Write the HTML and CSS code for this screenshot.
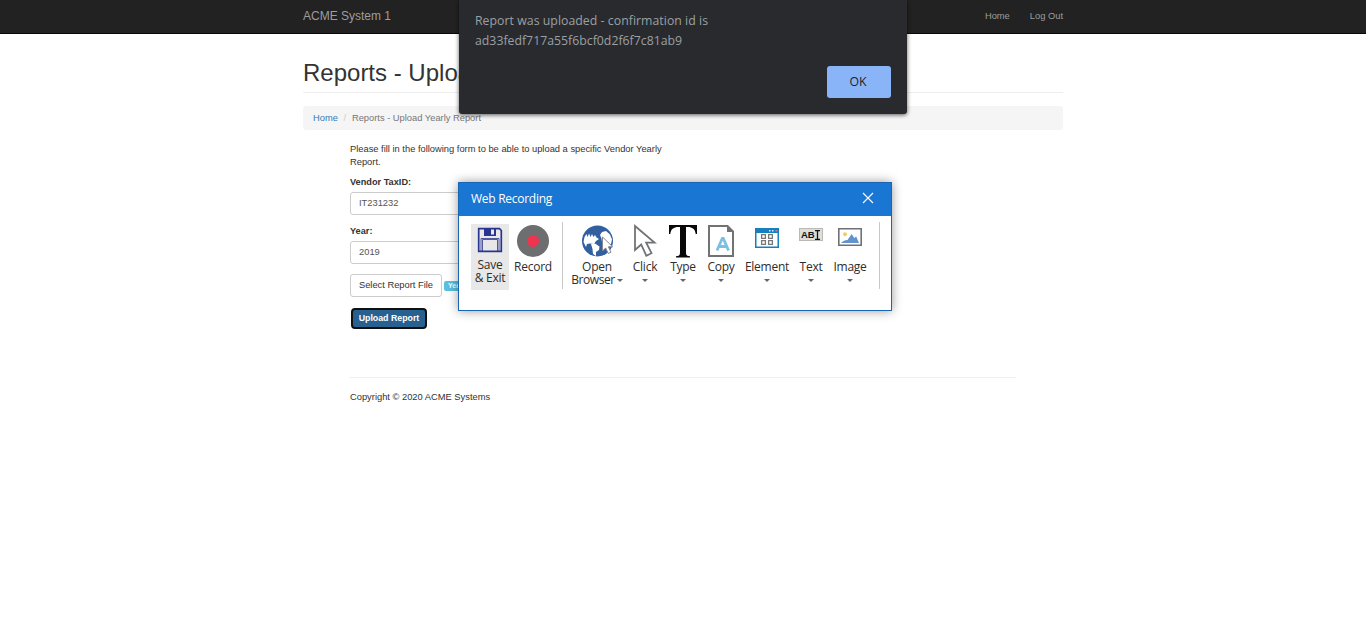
FILE: index.html
```html
<!DOCTYPE html>
<html lang="en">
<head>
<meta charset="utf-8">
<title>ACME System 1 - Upload Yearly Report</title>
<link rel="stylesheet" href="styles.css">
</head>
<body>
<nav class="navbar">
  <div class="container nav-row">
    <a class="brand">ACME System 1</a>
    <div class="nav-links"><a class="nav-home">Home</a><a class="nav-out">Log Out</a></div>
  </div>
</nav>
<main class="container">
  <h1 class="page-title">Reports - Upload</h1>
  <div class="breadcrumb"><a class="crumb-link">Home</a><span class="crumb-sep">/</span><span class="crumb-now">Reports - Upload Yearly Report</span></div>
  <div class="content">
    <p class="intro"><span class="intro-line">Please fill in the following form to be able to upload a specific Vendor Yearly</span><br>Report.</p>
    <label class="label label-tax">Vendor TaxID:</label>
    <div class="field">IT231232</div>
    <label class="label label-year">Year:</label>
    <div class="field">2019</div>
    <div class="file-row"><button class="btn-file">Select Report File</button><span class="tag">Year</span></div>
    <button class="btn-upload">Upload Report</button>
    <footer class="footer"><span class="copyright">Copyright © 2020 ACME Systems</span></footer>
  </div>
</main>

<section class="alert">
  <p class="alert-text"><span class="alert-l1">Report was uploaded - confirmation id is</span><br><span class="alert-l2">ad33fedf717a55f6bcf0d2f6f7c81ab9</span></p>
  <button class="alert-ok">OK</button>
</section>

<section class="recorder">
  <header class="rec-head"><span class="rec-title">Web Recording</span>
    <svg class="rec-close" width="12" height="12" viewBox="0 0 12 12"><path d="M1 1L11 11M11 1L1 11" stroke="#fff" stroke-width="1.1"/></svg>
  </header>
  <div class="rec-bar">
    <div class="tool tool-save">
      <svg class="icon" width="26" height="26" viewBox="0 0 26 26" fill="none" stroke="#28348f"><path d="M1.7 1.7H22.5L24.3 3.5V24.3H1.7Z" stroke-width="1.7"/><path d="M7 1H19V9H7Z" fill="#28348f" stroke="none"/><path d="M14 2.5H17V7.5H14Z" fill="#e8e8e8" stroke="none"/><path d="M5.5 24V12.5H20.5V24M4 24V11.5H22V24" stroke-width=".8"/></svg>
      <span class="name"><span class="line">Save</span><span class="line">&amp; Exit</span></span>
    </div>
    <div class="tool tool-record">
      <svg class="icon" width="32" height="32" viewBox="0 0 32 32"><circle cx="16" cy="16" r="16" fill="#6d6e70"/><circle cx="16" cy="16" r="6" fill="#ee344e"/></svg>
      <span class="name">Record</span>
    </div>
    <i class="divider"></i>
    <div class="tool tool-open">
      <svg class="icon" width="34" height="32" viewBox="0 0 34 32"><circle cx="17.5" cy="16" r="15.5" fill="#315f9f"/><path d="M3.5 17L4.5 12L6.5 9L7.5 12L9 8.5L10.5 12L12 9L13.5 12L15 10L16.5 12.5L19 14L16 16L14 19L10 18.5L7 19L6 22Z" fill="#fff"/><path d="M11 19L15 18.5L19.5 21.5L19 25L16 27L16 31L13 29L12.5 24Z" fill="#fff"/><path d="M20 10L22 7L26 6L30 9.5L32 14.5L31 19L27 19L22 17L21.5 13.5Z" fill="#fff"/><path d="M22.5 12V26L25.6 22.9L28.3 28.5L31 27.2L28.4 21.8H32.7Z" fill="#fff" stroke="#85878a"/></svg>
      <span class="name"><span class="line">Open</span><span class="line browser">Browser<b class="arrow arrow-inline"></b></span></span>
    </div>
    <div class="tool tool-click">
      <svg class="icon" width="24" height="34" viewBox="0 0 24 34"><path d="M2 2V26L8.2 20.5L13.3 31.7L18.5 29.2L13.2 18.7H21.8Z" fill="#fff" stroke="#727376" stroke-width="1.8"/></svg>
      <span class="name">Click</span><b class="arrow"></b>
    </div>
    <div class="tool tool-type">
      <svg class="icon" width="28" height="33" viewBox="0 0 28 33"><path d="M0 0H28V9H26.7C26.1 4 23.5 2 18.5 2H17V27.5C17 30.3 18 31.2 21 31.2V32.5H7V31.2C10 31.2 11 30.3 11 27.5V2H9.5C4.5 2 1.9 4 1.3 9H0Z" fill="#080808"/></svg>
      <span class="name">Type</span><b class="arrow"></b>
    </div>
    <div class="tool tool-copy">
      <svg class="icon" width="26" height="32" viewBox="0 0 26 32" fill="none"><path d="M1 1H19.5L25 6.5V31H1Z" fill="#fff" stroke="#707274" stroke-width="2"/><path d="M19 1V7H25Z" fill="#707274"/><path d="M9 25.5L14.3 13.3H15.3L20.5 25.5M11.4 21.5H18.5" stroke="#7dbfe4" stroke-width="2.8"/></svg>
      <span class="name">Copy</span><b class="arrow"></b>
    </div>
    <div class="tool tool-element">
      <svg class="icon" width="24" height="20" viewBox="0 0 24 20"><path d="M0 0H24V20H0Z" fill="#1580bd"/><path d="M1.5 5H22.5V18.5H1.5Z" fill="#fff"/><path d="M14 2H15.5V3.5H14ZM17 2H18.5V3.5H17Z" fill="#d4eefc"/><path d="M20.5 2H22.3V3.5H20.5Z" fill="#e5748b"/><path d="M6.6 6.6H10.4V10.4H6.6ZM13.6 6.6H17.4V10.4H13.6ZM6.6 12.6H10.4V16.4H6.6ZM13.6 12.6H17.4V16.4H13.6Z" fill="#fff" stroke="#77787a" stroke-width="1.3"/></svg>
      <span class="name">Element</span><b class="arrow"></b>
    </div>
    <div class="tool tool-text">
      <div class="icon text-icon"><span>AB</span><svg width="5" height="10" viewBox="0 0 5 10"><path d="M0 .7H2L2.5 1.2L3 .7H5M2.5 1V9M0 9.3H2L2.5 8.8L3 9.3H5" stroke="#111" stroke-width="1.3" fill="none"/></svg></div>
      <span class="name">Text</span><b class="arrow"></b>
    </div>
    <div class="tool tool-image">
      <svg class="icon" width="24" height="18" viewBox="0 0 24 18"><path d="M.8 .8H23.2V17.2H.8Z" fill="#fff" stroke="#707174" stroke-width="1.6"/><circle cx="7" cy="6.3" r="2" fill="#f0cf63"/><path d="M3 15C5 13 7 12 9.5 12L13.7 6L16.2 10L18.2 8.5L21 15Z" fill="#6492cd"/></svg>
      <span class="name">Image</span><b class="arrow"></b>
    </div>
    <i class="divider divider-end"></i>
  </div>
</section>
</body>
</html>
```
FILE: styles.css
```css
* { box-sizing: border-box; }
body { margin: 0; height: 635px; overflow: hidden; position: relative; background: #fff; color: #333; font: 9.33px/13px "Liberation Sans", Arial, sans-serif; }
button { font: inherit; padding: 0; }
span, a { white-space: nowrap; }
.container { width: 760px; margin: 0 auto; }
.navbar { height: 34px; background: #222; border-bottom: 1px solid #080808; color: #9d9d9d; }
.nav-row { display: flex; justify-content: space-between; line-height: 32px; }
.brand { font-size: 12px; }
.nav-links { display: flex; gap: 20px; }
.page-title { margin: 0; padding-top: 25px; height: 59px; font-size: 24px; line-height: 28px; font-weight: 400; border-bottom: 1px solid #eee; }
.breadcrumb { margin-top: 13px; height: 24px; padding-left: 10px; line-height: 24px; background: #f5f5f5; border-radius: 3px; color: #777; display: flex; }
.crumb-link { color: #337ab7; }
.crumb-sep { color: #ccc; width: 14px; text-align: center; }
.content { width: 666px; margin: 13px 0 0 47px; }
.intro { margin: 0; height: 26px; }
.label { display: block; font-weight: 700; font-size: 9.2px; }
.label-tax { margin: 7px 0 3px; }
.label-year { margin: 10px 0 3px; }
.field { width: 187px; height: 23px; border: 1px solid #ccc; border-radius: 3px; padding-left: 8px; line-height: 21px; color: #555; }
.file-row { display: flex; align-items: center; gap: 2px; margin: 10px 0; }
.btn-file { width: 92px; height: 23px; background: #fff; border: 1px solid #ccc; border-radius: 3px; color: #333; }
.tag { width: 28px; height: 10px; padding-left: 4px; line-height: 10px; background: #5bc0de; color: #fff; border-radius: 2px; font-size: 7px; font-weight: 700; }
.btn-upload { display: block; width: 76px; height: 21px; margin: 11px 0 0 1px; background: #286090; color: #fff; font-weight: 700; font-size: 8.8px; border: 2px solid #101010; border-radius: 4px; }
.footer { margin-top: 48px; padding-top: 13px; border-top: 1px solid #eee; }

.alert { position: absolute; left: 459px; top: 0; width: 448px; height: 114px; padding: 11px 16px 10px; background: #292a2d; color: #9aa0a6; border-radius: 0 0 3px 3px; box-shadow: 0 1px 4px rgba(0,0,0,.65); font: 12.3px/20px "Open Sans", sans-serif; display: flex; flex-direction: column; justify-content: space-between; }
.alert-text { margin: 0; }
.alert-l1 { letter-spacing: .03px; }
.alert-ok { align-self: flex-end; width: 64px; height: 32px; margin-bottom: 6px; padding-right: 2px; border: 0; border-radius: 3px; background: #8ab4f8; color: #202124; }

.recorder { position: absolute; left: 458px; top: 182px; width: 434px; height: 129px; background: #fff; border: 1px solid #1866b4; box-shadow: 0 0 10px rgba(0,0,0,.4); font: 12px/13px "Open Sans", sans-serif; color: #2d2d2d; }
.rec-head { height: 33px; padding: 0 17px 3px 12px; display: flex; align-items: center; justify-content: space-between; background: #1976d3; color: #fff; }
.rec-title { letter-spacing: -.27px; }
.rec-bar { display: flex; padding: 8px 0 0 12px; height: 75px; }
.tool { display: flex; flex-direction: column; align-items: center; flex: none; height: 66px; text-align: center; }
.icon { display: block; flex: none; }
.name { margin-top: auto; height: 30px; letter-spacing: -.25px; }
.line { display: block; line-height: 13px; }
.browser { display: flex; align-items: center; letter-spacing: -.45px; }
.arrow { border: 3px solid transparent; border-top-color: #666; border-bottom: 0; margin: -11px 0 8px; height: 3px; width: 6px; flex: none; }
.arrow-inline { margin: 1px 0 0 2px; }
.divider { flex: none; width: 1px; height: 67px; margin: -2px 9px 0 5px; background: #c8c8c8; }
.divider-end { margin: -2px 0 0 11px; }
.tool-save { width: 38px; background: #e8e8e8; padding-top: 3px; }
.tool-save .name { height: 32px; }
.tool-record { width: 48px; padding-top: 1px; }
.tool-open { width: 50px; padding-top: 1px; }
.tool-click { width: 46px; }
.tool-type { width: 30px; padding-top: 1px; }
.tool-copy { width: 46px; padding-top: 1px; }
.tool-element { width: 46px; padding-top: 4px; }
.tool-text { width: 42px; padding-top: 4px; }
.tool-image { width: 36px; padding-top: 4px; }
.text-icon { width: 24px; height: 13px; border: 1px solid #b9bab5; background: #deded9; display: flex; align-items: center; padding-left: 1px; font: 700 9.5px/11px "Liberation Sans", Arial, sans-serif; color: #111; }
```
